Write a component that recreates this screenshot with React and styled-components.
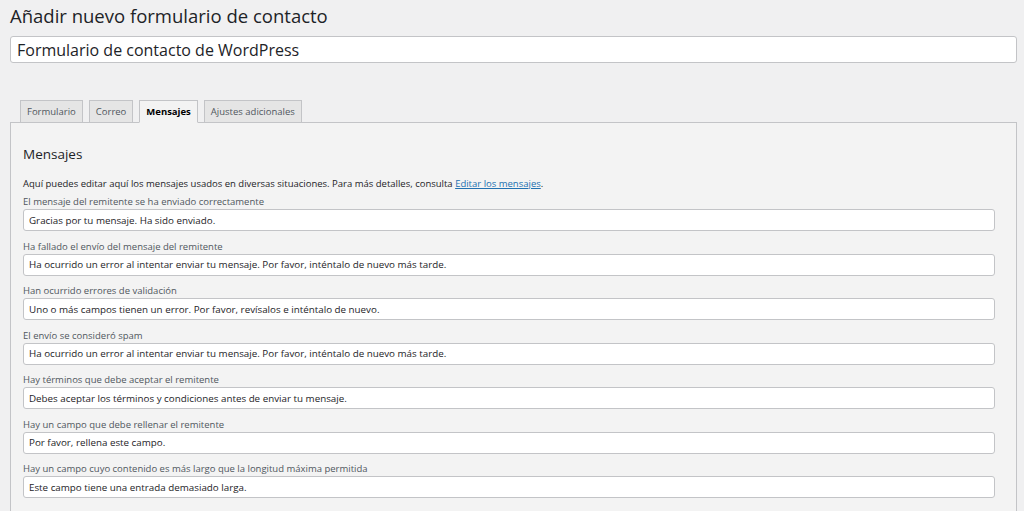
import React from "react";
import styled, { createGlobalStyle } from "styled-components";

const Global = createGlobalStyle`
  html, body { margin: 0; background: #f0f0f1; }
  body { font-family: "Open Sans", "Noto Sans", sans-serif; color: #1d2327; }
`;

const Page = styled.div`
  padding: 3px 7px 0 10px;
  height: 511px;
  overflow: hidden;
  box-sizing: border-box;
`;

const Title = styled.h1`
  font-size: 18.5px;
  font-weight: 400;
  margin: 0 0 7px;
  line-height: 26px;
`;

const TitleInput = styled.input`
  display: block;
  width: 100%;
  box-sizing: border-box;
  height: 27px;
  padding: 0 6px;
  font: 400 16px "Open Sans", "Noto Sans", sans-serif;
  color: #1d2327;
  border: 1px solid #c3c4c7;
  border-radius: 3px;
  background: #fff;
  margin-bottom: 37px;
`;

const Tabs = styled.div`
  display: flex;
  gap: 6px;
  padding-left: 10px;
  position: relative;
  z-index: 1;
`;

const Tab = styled.div`
  height: 21px;
  padding: 0 6px;
  display: flex;
  align-items: center;
  font-size: 9.5px;
  font-weight: ${p => (p.$active ? 700 : 400)};
  color: ${p => (p.$active ? "#000" : "#50575e")};
  background: ${p => (p.$active ? "#f3f3f3" : "#e5e5e5")};
  border: 1px solid #c3c4c7;
  border-bottom-color: ${p => (p.$active ? "#f3f3f3" : "#c3c4c7")};
  margin-bottom: -1px;
`;

const Panel = styled.div`
  background: #f3f3f3;
  border: 1px solid #c3c4c7;
  padding: 21px 21px 0 12px;
  height: 400px;
`;

const Heading = styled.h2`
  font-size: 13.5px;
  font-weight: 400;
  margin: 0 0 13px;
  line-height: 20px;
`;

const Intro = styled.p`
  font-size: 9.5px;
  margin: 0 0 4px;
  line-height: 14px;
  a { color: #2271b1; }
`;

const Field = styled.div`
  display: flex;
  flex-direction: column;
  margin-bottom: 8.5px;
`;

const Label = styled.label`
  font-size: 9.5px;
  color: #50575e;
  line-height: 13px;
  margin-bottom: 1px;
`;

const Input = styled.input`
  box-sizing: border-box;
  width: 100%;
  height: 22px;
  padding: 0 5px;
  font: 400 9.8px "Open Sans", "Noto Sans", sans-serif;
  color: #1d2327;
  border: 1px solid #c3c4c7;
  border-radius: 3px;
  background: #fff;
`;

const fields = [
  ["El mensaje del remitente se ha enviado correctamente", "Gracias por tu mensaje. Ha sido enviado."],
  ["Ha fallado el envío del mensaje del remitente", "Ha ocurrido un error al intentar enviar tu mensaje. Por favor, inténtalo de nuevo más tarde."],
  ["Han ocurrido errores de validación", "Uno o más campos tienen un error. Por favor, revísalos e inténtalo de nuevo."],
  ["El envío se consideró spam", "Ha ocurrido un error al intentar enviar tu mensaje. Por favor, inténtalo de nuevo más tarde."],
  ["Hay términos que debe aceptar el remitente", "Debes aceptar los términos y condiciones antes de enviar tu mensaje."],
  ["Hay un campo que debe rellenar el remitente", "Por favor, rellena este campo."],
  ["Hay un campo cuyo contenido es más largo que la longitud máxima permitida", "Este campo tiene una entrada demasiado larga."],
];

export default function App() {
  return (
    <Page>
      <Global />
      <Title>Añadir nuevo formulario de contacto</Title>
      <TitleInput defaultValue="Formulario de contacto de WordPress" />
      <Tabs>
        <Tab>Formulario</Tab>
        <Tab>Correo</Tab>
        <Tab $active>Mensajes</Tab>
        <Tab>Ajustes adicionales</Tab>
      </Tabs>
      <Panel>
        <Heading>Mensajes</Heading>
        <Intro>
          Aquí puedes editar aquí los mensajes usados en diversas situaciones. Para más detalles, consulta{" "}
          <a href="#">Editar los mensajes</a>.
        </Intro>
        {fields.map(([l, v]) => (
          <Field key={l}>
            <Label>{l}</Label>
            <Input defaultValue={v} />
          </Field>
        ))}
      </Panel>
    </Page>
  );
}
